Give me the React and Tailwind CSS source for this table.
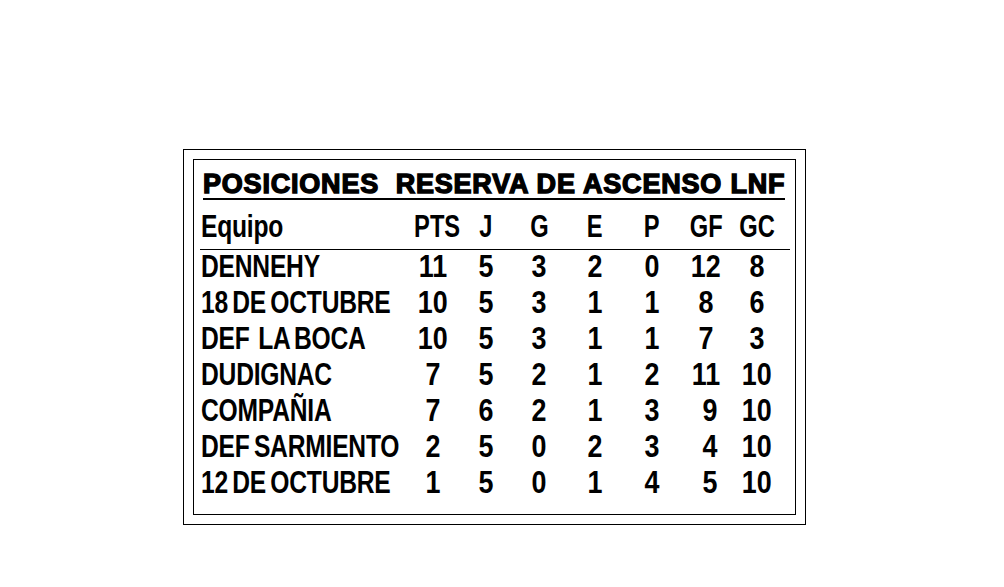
const rows = [
  { team: 'DENNEHY', pts: 11, j: 5, g: 3, e: 2, p: 0, gf: 12, gc: 8 },
  { team: '18 DE OCTUBRE', pts: 10, j: 5, g: 3, e: 1, p: 1, gf: 8, gc: 6 },
  { team: 'DEF  LA BOCA', pts: 10, j: 5, g: 3, e: 1, p: 1, gf: 7, gc: 3 },
  { team: 'DUDIGNAC', pts: 7, j: 5, g: 2, e: 1, p: 2, gf: 11, gc: 10 },
  { team: 'COMPAÑIA', pts: 7, j: 6, g: 2, e: 1, p: 3, gf: 9, gc: 10, shift: true },
  { team: 'DEF SARMIENTO', pts: 2, j: 5, g: 0, e: 2, p: 3, gf: 4, gc: 10, shift: true },
  { team: '12 DE OCTUBRE', pts: 1, j: 5, g: 0, e: 1, p: 4, gf: 5, gc: 10, shift: true },
];

const cols = 'grid grid-cols-[206px_53px_53px_54px_57px_57px_52px_50px]';

// the print face is a condensed grotesque; squeeze Liberation Sans to fit
function Name({ children }) {
  return (
    <div className="pl-[1px] whitespace-pre">
      <span className="inline-block origin-left scale-x-[0.77] tracking-[-0.3px] [word-spacing:-3px]">{children}</span>
    </div>
  );
}

function Num({ children, label, className = '' }) {
  return (
    <div className={`text-center ${className}`}>
      <span className={`inline-block ${label ? 'scale-x-[0.74]' : 'scale-x-[0.84]'}`}>{children}</span>
    </div>
  );
}

export default function App() {
  return (
    <div className="min-h-screen bg-white pt-[149px] pl-[183px]">
      {/* outer frame */}
      <div className="w-[623px] h-[376px] border border-black p-[9px]">
        {/* inner frame */}
        <div className="h-[356px] border border-black pt-[10px]">
          <div className="pl-[9px]">
            <span className="inline-block border-b-2 border-black text-[27px] leading-[28px] font-bold tracking-[0.8px] text-black [font-family:'Liberation_Sans',Arial,sans-serif] [-webkit-text-stroke:1.4px_black] whitespace-pre">
              {'POSICIONES  RESERVA DE ASCENSO LNF'}
            </span>
          </div>

          <div className="ml-[6px] w-[590px] mt-[9px] text-black font-bold text-[32px] [font-family:'Liberation_Sans',Arial,sans-serif]">
            <div className="border-b border-black pb-[4px]">
              <div className={`${cols} h-[36px] leading-[34px]`}>
                <Name>Equipo</Name>
                <Num label>PTS</Num>
                <Num label>J</Num>
                <Num label>G</Num>
                <Num label>E</Num>
                <Num label>P</Num>
                <Num label>GF</Num>
                <Num label>GC</Num>
              </div>
            </div>

            {rows.map((r) => (
              <div key={r.team} className={`${cols} h-[36px] leading-[32px]`}>
                <Name>{r.team}</Name>
                <Num>{r.pts}</Num>
                <Num>{r.j}</Num>
                <Num>{r.g}</Num>
                <Num>{r.e}</Num>
                <Num>{r.p}</Num>
                <Num className={r.shift ? 'pl-[8px]' : ''}>{r.gf}</Num>
                <Num>{r.gc}</Num>
              </div>
            ))}
          </div>
        </div>
      </div>
    </div>
  );
}
